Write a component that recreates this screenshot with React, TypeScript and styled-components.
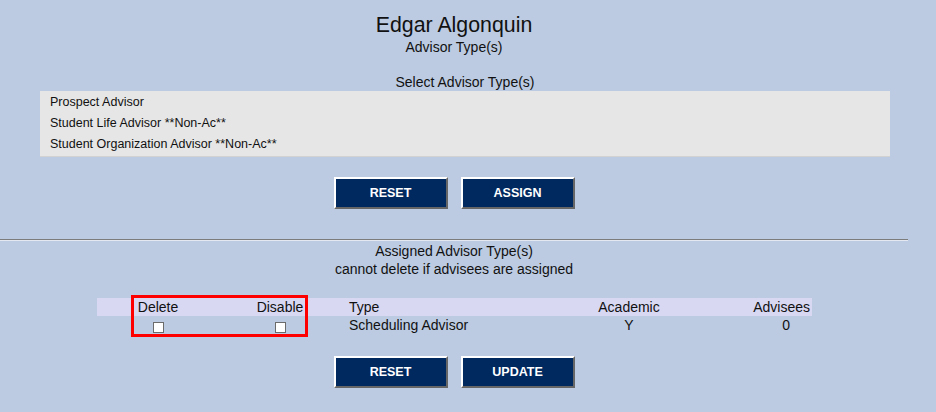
import * as React from "react"
import styled, { createGlobalStyle } from 'styled-components'

const GlobalStyle = createGlobalStyle`
    html, body {
        margin: 0;
        padding: 0;
        background: #bccbe1;
        font-family: "Liberation Sans", Arial, sans-serif;
        color: #111;
    }
`

const Page = styled.div`
    width: 908px;
    padding-bottom: 25px;
`

const Title = styled.div`
    margin-top: 13px;
    text-align: center;
    font-size: 21.33px;
    line-height: 24px;
`

const SubTitle = styled.div<{ $gap?: number }>`
    margin-top: ${p => p.$gap ?? 0}px;
    text-align: center;
    font-size: 14px;
    line-height: ${p => (p.$gap === undefined ? 18 : 16)}px;
`

const SelectSection = styled.div`
    margin: 19px 18px 0 40px;
`

const ListBox = styled.div`
    margin-top: 1px;
    background: #e6e6e6;
    border-bottom: 1px solid #d2d2d2;
    padding: 1px 0;
`

const ListItem = styled.div`
    padding-left: 10px;
    font-size: 12.5px;
    line-height: 21px;
`

const ButtonRow = styled.div<{ $top: number }>`
    margin-top: ${p => p.$top}px;
    display: flex;
    justify-content: center;
    gap: 13px;
`

const Button = styled.button`
    width: 114px;
    height: 32px;
    box-sizing: border-box;
    background: #002960;
    color: #fff;
    font-family: "Liberation Sans", Arial, sans-serif;
    font-weight: bold;
    font-size: 12.5px;
    border-style: solid;
    border-width: 2px;
    border-color: #fff #666 #666 #fff;
    padding: 0;
    cursor: pointer;
`

const Rule = styled.hr`
    margin: 30px 0 0 0;
    height: 0;
    border: none;
    border-top: 1px solid #7c7c7c;
    border-bottom: 1px solid #e4e8f0;
`

const Assigned = styled.div`
    margin-top: 1px;
`

const TableWrap = styled.div`
    position: relative;
    margin: 20px 0 0 97px;
    width: 715px;
`

const GridRow = styled.div<{ $head?: boolean }>`
    display: grid;
    grid-template-columns: 122px 122px 234px 108px 129px;
    height: 18px;
    align-items: center;
    font-size: 14px;
    line-height: 18px;
    background: ${p => (p.$head ? '#d8d8f3' : 'transparent')};
`

const Cell = styled.div<{ $align?: string; $pl?: number; $pr?: number }>`
    padding-left: ${p => p.$pl ?? 0}px;
    padding-right: ${p => p.$pr ?? 0}px;
    white-space: nowrap;
    display: flex;
    justify-content: ${p => (p.$align === 'left' ? 'flex-start' : p.$align === 'right' ? 'flex-end' : 'center')};
    align-items: center;
    height: 18px;
`

const Check = styled.input.attrs({ type: 'checkbox' })`
    appearance: none;
    margin: 4px 0 0 0;
    width: 11px;
    height: 11px;
    box-sizing: border-box;
    background: #fff;
    border: 1px solid #6b6b6b;
`

const Highlight = styled.div`
    position: absolute;
    left: 34px;
    top: -3px;
    width: 177px;
    height: 42px;
    box-sizing: border-box;
    border: 3px solid #ff0000;
    pointer-events: none;
`

export default function App() {
    return (
        <>
            <GlobalStyle />
            <Page>
                <Title>Edgar Algonquin</Title>
                <SubTitle $gap={2}>Advisor Type(s)</SubTitle>

                <SelectSection>
                    <SubTitle $gap={0}>Select Advisor Type(s)</SubTitle>
                    <ListBox>
                        <ListItem>Prospect Advisor</ListItem>
                        <ListItem>Student Life Advisor **Non-Ac**</ListItem>
                        <ListItem>Student Organization Advisor **Non-Ac**</ListItem>
                    </ListBox>
                </SelectSection>

                <ButtonRow $top={20}>
                    <Button>RESET</Button>
                    <Button>ASSIGN</Button>
                </ButtonRow>

                <Rule />

                <Assigned>
                    <SubTitle>Assigned Advisor Type(s)</SubTitle>
                    <SubTitle>cannot delete if advisees are assigned</SubTitle>
                </Assigned>

                <TableWrap>
                    <GridRow $head>
                        <Cell>Delete</Cell>
                        <Cell>Disable</Cell>
                        <Cell $align="left" $pl={8}>Type</Cell>
                        <Cell>Academic</Cell>
                        <Cell $align="right" $pr={2}>Advisees</Cell>
                    </GridRow>
                    <GridRow>
                        <Cell><Check /></Cell>
                        <Cell><Check /></Cell>
                        <Cell $align="left" $pl={8}>Scheduling Advisor</Cell>
                        <Cell>Y</Cell>
                        <Cell $align="right" $pr={22}>0</Cell>
                    </GridRow>
                    <Highlight />
                </TableWrap>

                <ButtonRow $top={22}>
                    <Button>RESET</Button>
                    <Button>UPDATE</Button>
                </ButtonRow>
            </Page>
        </>
    )
}
